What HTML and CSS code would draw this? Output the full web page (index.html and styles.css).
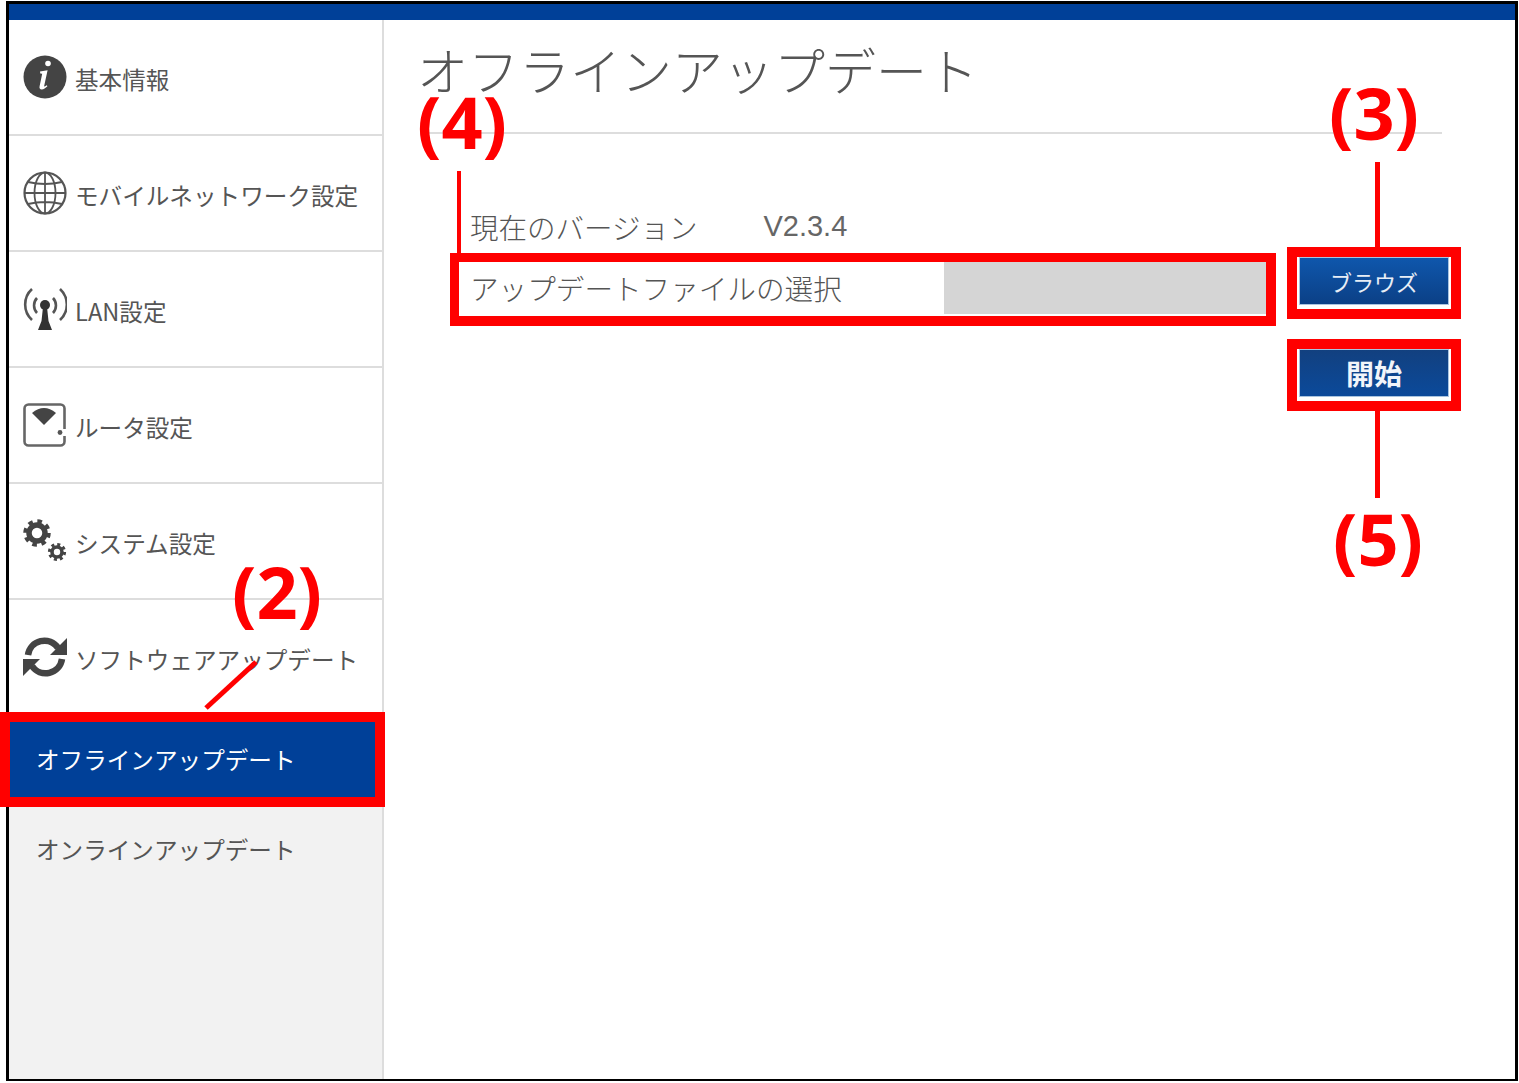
FILE: index.html
```html
<!DOCTYPE html>
<html lang="ja">
<head>
  <meta charset="UTF-8" />
  <title>オフラインアップデート</title>
  <link rel="stylesheet" href="styles.css">
</head>
<body>
  <div class="frame">
    <div class="topbar"></div>
    <div class="layout">
      <nav class="sidebar">
        <a class="nav-item" href="#">
          <svg class="nav-icon" viewBox="0 0 44 44">
            <circle cx="22" cy="22" r="21.5" fill="#444"/>
            <circle cx="25" cy="8.5" r="2.8" fill="#fff"/>
            <path fill="#fff" d="M17 16.6l7.6-1.4-3.4 15.6q-.2 1.2 1 .5l1.6-1 .6.9c-2 2-3.6 3.2-5.7 3.2-1.8 0-2.6-1-2.1-3.1l2.6-12.6-1.9-.3z"/>
          </svg>
          <span>基本情報</span>
        </a>
        <a class="nav-item" href="#">
          <svg class="nav-icon" viewBox="0 0 44 44" fill="none" stroke="#555" stroke-width="1.8">
            <circle cx="22" cy="22" r="20.5" stroke-width="2.2"/>
            <ellipse cx="22" cy="22" rx="10.5" ry="20.5"/>
            <path d="M22 1.5v41M1.5 22h41M5 11q17 4 34 0M5 33q17-4 34 0"/>
          </svg>
          <span>モバイルネットワーク設定</span>
        </a>
        <a class="nav-item" href="#">
          <svg class="nav-icon" viewBox="0 0 44 44" fill="none" stroke="#555" stroke-width="2.6">
            <path d="M14 11a11 11 0 0 0 0 15M30 11a11 11 0 0 1 0 15M9 2a21 21 0 0 0 0 31M37 2a21 21 0 0 1 0 31"/>
            <circle cx="22" cy="18" r="5" fill="#333" stroke="none"/>
            <path fill="#333" stroke="none" d="M20 20h4l1.5 14 3.5 9H15l3.5-9z"/>
          </svg>
          <span>LAN設定</span>
        </a>
        <a class="nav-item" href="#">
          <svg class="nav-icon" viewBox="0 0 44 44">
            <rect x="1.5" y="1.5" width="40" height="41" rx="4" fill="#fff" stroke="#666" stroke-width="2.6"/>
            <path fill="#444" d="M9 10Q21 0 33 10L21 22z"/>
            <rect x="37" y="26" width="7" height="7" fill="#fff"/>
            <circle cx="37" cy="29.5" r="2.4" fill="#555"/>
          </svg>
          <span>ルータ設定</span>
        </a>
        <a class="nav-item" href="#">
          <svg class="nav-icon" viewBox="0 0 44 44" fill="none" stroke="#444">
            <circle cx="14" cy="14" r="8" stroke-width="5.5"/>
            <circle cx="14" cy="14" r="11.5" stroke-width="4.5" stroke-dasharray="4.5 4.53"/>
            <circle cx="34" cy="33" r="5" stroke-width="3.6"/>
            <circle cx="34" cy="33" r="7.6" stroke-width="3" stroke-dasharray="3 2.97"/>
          </svg>
          <span>システム設定</span>
        </a>
        <a class="nav-item" href="#">
          <svg class="nav-icon" viewBox="0 0 44 44">
            <path fill="none" stroke="#444" stroke-width="6.5" d="M5 20A16.5 16.5 0 0 1 35 13M39 24A16.5 16.5 0 0 1 9 31"/>
            <path fill="#444" d="M44 3v17H27zM0 41V24h17z"/>
          </svg>
          <span>ソフトウェアアップデート</span>
        </a>
        <a class="sub-item active" href="#">オフラインアップデート</a>
        <a class="sub-item online" href="#">オンラインアップデート</a>
      </nav>

      <main class="content">
        <h1 class="title">オフラインアップデート</h1>
        <div class="form">
          <div class="version-row">
            <span class="version-label">現在のバージョン</span>
            <span class="version-value">V2.3.4</span>
          </div>
          <div class="file-row">
            <div class="file-info">
              <span class="file-label">アップデートファイルの選択</span>
              <div class="file-field"></div>
            </div>
            <button class="btn btn-browse" type="button">ブラウズ</button>
          </div>
          <div class="start-row">
            <button class="btn btn-start" type="button">開始</button>
          </div>
        </div>
      </main>
    </div>
  </div>

  <!-- red callouts drawn over the screenshot -->
  <div class="box box-2"></div>
  <div class="box box-3"></div>
  <div class="box box-4"></div>
  <div class="box box-5"></div>
  <div class="line line-3"></div>
  <div class="line line-4"></div>
  <div class="line line-5"></div>
  <svg class="line-2" viewBox="0 0 60 56"><path d="M55 3L5 49" stroke="#f00" stroke-width="5"/></svg>
  <span class="tag tag-2">(2)</span>
  <span class="tag tag-3">(3)</span>
  <span class="tag tag-4">(4)</span>
  <span class="tag tag-5">(5)</span>
</body>
</html>
```

FILE: styles.css
```css
* {
  box-sizing: border-box;
}

body {
  margin: 0;
  height: 1083px;
  position: relative;
  overflow: hidden;
  background: #fff;
  color: #555;
  font-family: "Noto Sans CJK JP", "Noto Sans", sans-serif;
}

a {
  color: inherit;
  text-decoration: none;
}

.frame {
  display: flex;
  flex-direction: column;
  width: 1512px;
  height: 1080px;
  margin: 1px 0 0 6px;
  border: 3px solid #000;
  border-bottom-width: 2px;
}

.topbar {
  height: 16px;
  background: #004098;
}

.layout {
  display: flex;
  flex: 1;
}

/* Sidebar */
.sidebar {
  flex: none;
  width: 375px;
  background: #f2f2f2;
  border-right: 2px solid #ddd;
}

.nav-item {
  display: flex;
  align-items: center;
  gap: 8px;
  height: 116px;
  padding-left: 14px;
  background: #fff;
  border-bottom: 2px solid #ddd;
  font-size: 23.6px;
}

.nav-item span {
  margin-top: 3px;
}

.nav-icon {
  width: 44px;
  height: 44px;
  flex: none;
}

.sub-item {
  display: flex;
  align-items: center;
  padding-left: 27px;
  font-size: 23.6px;
}

.active {
  height: 85px;
  background: #004098;
  color: #fff;
}

.online {
  height: 96px;
}

/* Main content */
.content {
  flex: 1;
  min-width: 0;
  padding: 0 73px 0 36px;
}

.title {
  height: 114px;
  margin: 0;
  padding-top: 13px;
  border-bottom: 2px solid #ddd;
  font-size: 51px;
  font-weight: 300;
  line-height: 72px;
  text-indent: -3px;
  color: #555;
}

.form {
  margin-right: -9px;
  padding-left: 30px;
}

.version-row {
  display: flex;
  align-items: center;
  height: 44px;
  margin-top: 70px;
  padding-left: 20px;
  font-size: 28.5px;
  font-weight: 300;
}

.version-value {
  margin-left: 66px;
  font-family: "Liberation Sans", sans-serif;
  font-size: 29px;
  font-weight: 400;
  color: #666;
}

.file-row {
  display: flex;
  align-items: flex-start;
  margin-top: 7px;
}

.file-info {
  display: flex;
  flex: none;
  align-items: center;
  width: 816px;
  height: 53px;
  margin-top: 6px;
}

.file-label {
  width: 494px;
  padding-left: 20px;
  font-size: 28.6px;
  font-weight: 300;
}

.file-field {
  width: 322px;
  height: 53px;
  background: #d5d5d5;
}

.btn {
  display: block;
  flex: none;
  width: 154px;
  height: 52px;
  margin: 0 0 0 31px;
  padding: 0;
  border: 2px solid #fff;
  box-shadow: inset 0 0 0 1px #a9c4e0;
  color: #e8eef6;
  font-family: inherit;
}

.btn-browse {
  background: linear-gradient(#0f57ad, #0b3f85);
  font-size: 22px;
}

.btn-start {
  background: linear-gradient(#12407f, #0b4a9b);
  font-size: 28px;
  font-weight: 700;
  color: #f2f5fa;
}

.start-row {
  display: flex;
  justify-content: flex-end;
  margin-top: 33px;
}

/* Red callouts */
.box {
  position: absolute;
  border: 10px solid #f00;
}

.box-2 {
  left: 0;
  top: 712px;
  width: 385px;
  height: 95px;
}

.box-3 {
  left: 1287px;
  top: 247px;
  width: 174px;
  height: 72px;
}

.box-4 {
  left: 450px;
  top: 253px;
  width: 826px;
  height: 73px;
  border-width: 9px 10px 10px 9px;
}

.box-5 {
  left: 1287px;
  top: 339px;
  width: 174px;
  height: 72px;
}

.line {
  position: absolute;
  background: #f00;
}

.line-3 {
  left: 1375px;
  top: 162px;
  width: 5px;
  height: 85px;
}

.line-4 {
  left: 457px;
  top: 171px;
  width: 4px;
  height: 82px;
}

.line-5 {
  left: 1375px;
  top: 411px;
  width: 5px;
  height: 87px;
}

.line-2 {
  position: absolute;
  left: 201px;
  top: 659px;
  width: 60px;
  height: 56px;
}

.tag {
  position: absolute;
  font-family: "Noto Sans", sans-serif;
  font-size: 72px;
  font-weight: 700;
  line-height: 90px;
  color: #f00;
}

.tag-2 {
  left: 232px;
  top: 546px;
}

.tag-3 {
  left: 1329px;
  top: 67px;
}

.tag-4 {
  left: 417px;
  top: 76px;
}

.tag-5 {
  left: 1333px;
  top: 493px;
}
```
